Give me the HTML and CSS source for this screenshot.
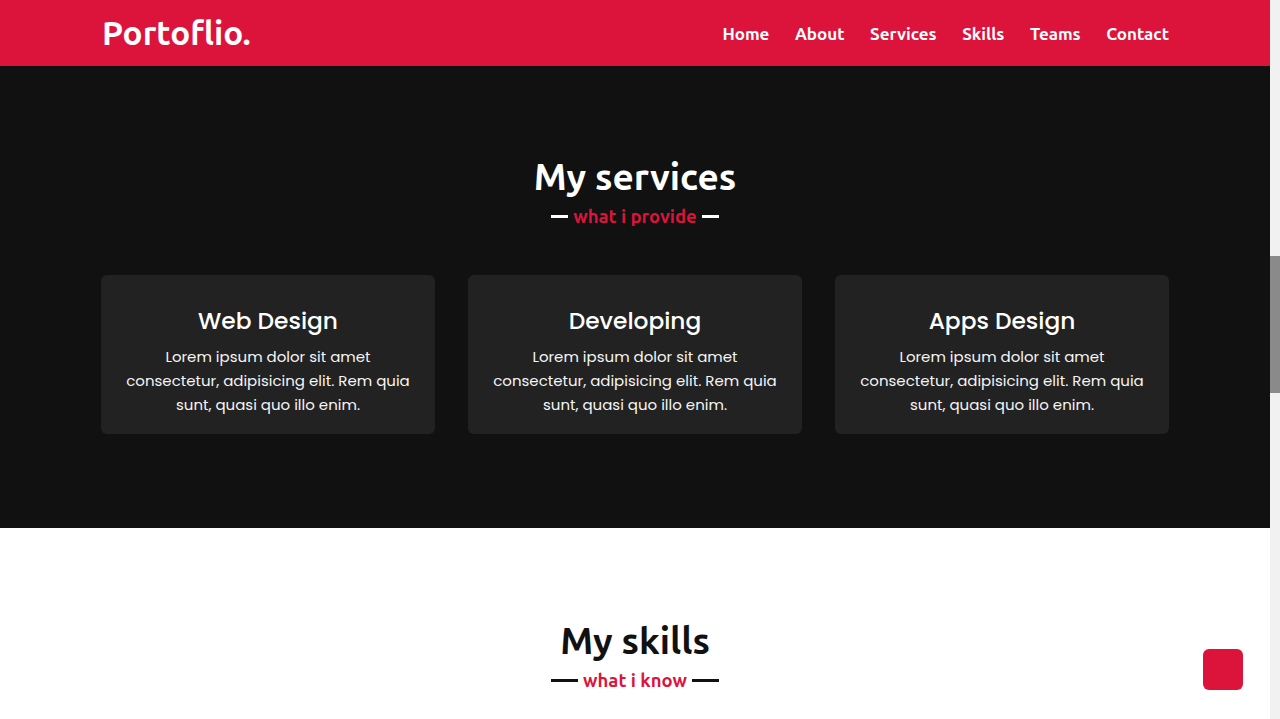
FILE: index.html
```html
<!DOCTYPE html>
<html lang="en">
<head>
<meta charset="utf-8">
<title>Portoflio</title>
<link rel="stylesheet" href="styles.css">
</head>
<body>
<div class="page">
  <div class="content">
    <nav class="navbar">
      <div class="max-width nav-inner">
        <a class="logo" href="#">Portoflio.</a>
        <ul class="menu">
          <li><a href="#">Home</a></li>
          <li><a href="#">About</a></li>
          <li><a href="#">Services</a></li>
          <li><a href="#">Skills</a></li>
          <li><a href="#">Teams</a></li>
          <li><a href="#">Contact</a></li>
        </ul>
      </div>
    </nav>
    <section class="services">
      <div class="max-width">
        <h2 class="title">My services</h2>
        <div class="subtitle"><span class="line"></span><span class="sub-text">what i provide</span><span class="line"></span></div>
        <div class="cards">
          <div class="card">
            <div class="card-title">Web Design</div>
            <p>Lorem ipsum dolor sit amet consectetur, adipisicing elit. Rem quia sunt, quasi quo illo enim.</p>
          </div>
          <div class="card">
            <div class="card-title">Developing</div>
            <p>Lorem ipsum dolor sit amet consectetur, adipisicing elit. Rem quia sunt, quasi quo illo enim.</p>
          </div>
          <div class="card">
            <div class="card-title">Apps Design</div>
            <p>Lorem ipsum dolor sit amet consectetur, adipisicing elit. Rem quia sunt, quasi quo illo enim.</p>
          </div>
        </div>
      </div>
    </section>
    <section class="skills">
      <div class="max-width">
        <h2 class="title">My skills</h2>
        <div class="subtitle"><span class="line"></span><span class="sub-text">what i know</span><span class="line"></span></div>
      </div>
    </section>
  </div>
  <div class="scrollbar"><div class="thumb"></div></div>
</div>
<a class="scroll-up" href="#" aria-label="Scroll up"></a>
</body>
</html>
```

FILE: styles.css
```css
* { box-sizing: border-box; margin: 0; padding: 0; }
html, body { height: 719px; overflow: hidden; }
body { font-family: "Ubuntu", "Open Sans", "Liberation Sans", sans-serif; background: #fff; }
a { text-decoration: none; color: inherit; }
ul { list-style: none; }

.page { display: flex; height: 719px; }
.content { flex: 1; min-width: 0; display: flex; flex-direction: column; }
.scrollbar { width: 10px; background: #f1f1f1; padding-top: 256px; }
.thumb { height: 137px; background: #8a8a8a; }

.max-width { width: 1068px; margin: 0 auto; }

.navbar { background: #dc143c; height: 66px; flex: none; }
.nav-inner { height: 100%; display: flex; align-items: center; justify-content: space-between; }
.logo { color: #fff; font-size: 33.3px; font-weight: 700; padding-left: 1px; padding-bottom: 1px; }
.menu { display: flex; gap: 25.5px; }
.menu a { color: #fff; font-size: 17px; font-weight: 600; }

.services { background: #111; color: #fff; padding: 87px 0 94px; }
.title { font-size: 37px; line-height: 48px; font-weight: 700; text-align: center; }
.subtitle { width: 168px; height: 24px; margin: 3px auto 0; display: flex; align-items: center; }
.line { flex: 1; height: 3px; background: #fff; }
.sub-text { color: #dc143c; font-size: 18.5px; font-weight: 700; padding: 0 5px; line-height: 24px; white-space: nowrap; }

.cards { display: flex; justify-content: space-between; margin-top: 47px; }
.card { width: 334px; background: #222; border-radius: 6px; padding: 31px 20px 17px; text-align: center; font-family: "Poppins", "Inter", "Liberation Sans", sans-serif; }
.card-title { font-size: 23.3px; line-height: 30px; font-weight: 500; margin-bottom: 9px; }
.card p { font-size: 15px; line-height: 24px; color: #f5f5f5; }

.skills { background: #fff; color: #111; padding-top: 89px; flex: 1; }
.skills .line { background: #111; }

.scroll-up { position: fixed; left: 1203px; top: 649px; width: 40px; height: 41px; background: #dc143c; border-radius: 6px; }
```
